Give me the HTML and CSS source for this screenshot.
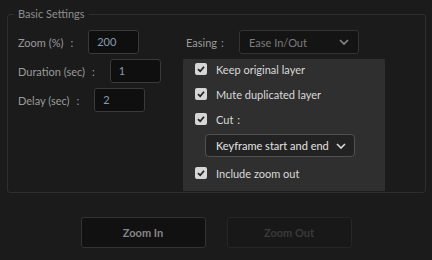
FILE: index.html
```html
<!DOCTYPE html>
<html>
<head>
<meta charset="utf-8">
<link rel="stylesheet" href="styles.css">
</head>
<body>
<fieldset class="settings">
  <legend class="legend">Basic Settings</legend>
  <div class="grid">
    <div class="left">
      <div class="row"><span class="label">Zoom (%)<span class="colon">:</span></span><div class="input">200</div></div>
      <div class="row"><span class="label">Duration (sec)<span class="colon">:</span></span><div class="input">1</div></div>
      <div class="row"><span class="label">Delay (sec)<span class="colon">:</span></span><div class="input">2</div></div>
    </div>
    <div class="right">
      <div class="row easing"><span class="label">Easing<span class="colon">:</span></span>
        <div class="select">
          <span>Ease In/Out</span>
          <svg class="chev" width="10" height="6" viewBox="0 0 10 6"><path d="M1 1 L5 5 L9 1" fill="none" stroke="#8a8a8a" stroke-width="1.6"/></svg>
        </div>
      </div>
      <div class="panel">
        <div class="check"><span class="box"><svg width="12" height="12" viewBox="0 0 12 12"><path d="M3 6.2 L5.2 8.3 L9 3.8" fill="none" stroke="#1f1f1f" stroke-width="1.7"/></svg></span><span>Keep original layer</span></div>
        <div class="check"><span class="box"><svg width="12" height="12" viewBox="0 0 12 12"><path d="M3 6.2 L5.2 8.3 L9 3.8" fill="none" stroke="#1f1f1f" stroke-width="1.7"/></svg></span><span>Mute duplicated layer</span></div>
        <div class="check"><span class="box"><svg width="12" height="12" viewBox="0 0 12 12"><path d="M3 6.2 L5.2 8.3 L9 3.8" fill="none" stroke="#1f1f1f" stroke-width="1.7"/></svg></span><span>Cut<span class="colon cut">:</span></span></div>
        <div class="cutsel">
          <span>Keyframe start and end</span>
          <svg class="chev" width="10" height="6" viewBox="0 0 10 6"><path d="M1 1 L5 5 L9 1" fill="none" stroke="#dcdcdc" stroke-width="1.6"/></svg>
        </div>
        <div class="check"><span class="box"><svg width="12" height="12" viewBox="0 0 12 12"><path d="M3 6.2 L5.2 8.3 L9 3.8" fill="none" stroke="#1f1f1f" stroke-width="1.7"/></svg></span><span>Include zoom out</span></div>
      </div>
    </div>
  </div>
</fieldset>
<div class="buttons">
  <div class="btn primary">Zoom In</div>
  <div class="btn disabled">Zoom Out</div>
</div>
</body>
</html>
```

FILE: styles.css
```css
html, body {
  margin: 0;
  padding: 0;
  background: #1b1b1b;
  width: 432px;
  height: 260px;
  overflow: hidden;
  font-family: Lato, "Open Sans", sans-serif;
  font-size: 11px;
  color: #9a9a9a;
}
.settings {
  margin: 0 6px 0 7px;
  padding: 0 0 1px 10px;
  border: 1px solid #2e2e2e;
  border-radius: 3px;
}
.legend {
  margin-left: -4px;
  padding: 0 4px;
  line-height: 28px;
  height: 28px;
  color: #8e8e8e;
}
.grid {
  display: grid;
  grid-template-columns: 165px 202px;
  padding-top: 2px;
}
.left, .right {
  display: flex;
  flex-direction: column;
  gap: 5px;
}
.row {
  display: flex;
  align-items: center;
  height: 24px;
}
.label {
  margin-right: 15px;
  white-space: nowrap;
}
.colon {
  margin-left: 7px;
}
.colon.cut {
  margin-left: 4px;
}
.input {
  width: 51px;
  height: 24px;
  box-sizing: border-box;
  border: 1px solid #3a3a3a;
  border-radius: 3px;
  background: #0f0f0f;
  color: #8a9bb0;
  padding-left: 8px;
  line-height: 22px;
}
.easing {
  padding-left: 3px;
}
.easing .label {
  margin-right: 0;
  width: 53px;
}
.easing .colon {
  margin-left: 4px;
}
.select {
  width: 120px;
  height: 24px;
  box-sizing: border-box;
  border: 1px solid #333;
  border-radius: 3px;
  background: #141414;
  color: #7c7c7c;
  display: flex;
  align-items: center;
  justify-content: space-between;
  padding: 0 9px 0 9px;
}
.panel {
  background: #2f2f2f;
  height: 132px;
  box-sizing: border-box;
  padding: 4px 0 0 12px;
  display: flex;
  flex-direction: column;
  gap: 13px;
  color: #dadada;
}
.check {
  display: flex;
  align-items: center;
  height: 12px;
  gap: 9px;
}
.box {
  width: 12px;
  height: 12px;
  background: #d6d6d6;
  border-radius: 2px;
  display: flex;
}
.cutsel {
  margin: -4px 0 -3px 10px;
  width: 150px;
  height: 23px;
  box-sizing: border-box;
  border: 1px solid #505050;
  border-radius: 4px;
  background: #222;
  color: #e2e2e2;
  display: flex;
  align-items: center;
  justify-content: space-between;
  padding: 0 8px 0 10px;
}
.buttons {
  display: flex;
  justify-content: center;
  gap: 21px;
  margin-top: 24px;
}
.btn {
  width: 125px;
  height: 31px;
  box-sizing: border-box;
  border-radius: 3px;
  display: flex;
  align-items: center;
  justify-content: center;
  font-weight: bold;
}
.primary {
  background: #111;
  border: 1px solid #333;
  color: #858585;
}
.disabled {
  background: #181818;
  border: 1px solid #262626;
  color: #3a3a3a;
}
```
